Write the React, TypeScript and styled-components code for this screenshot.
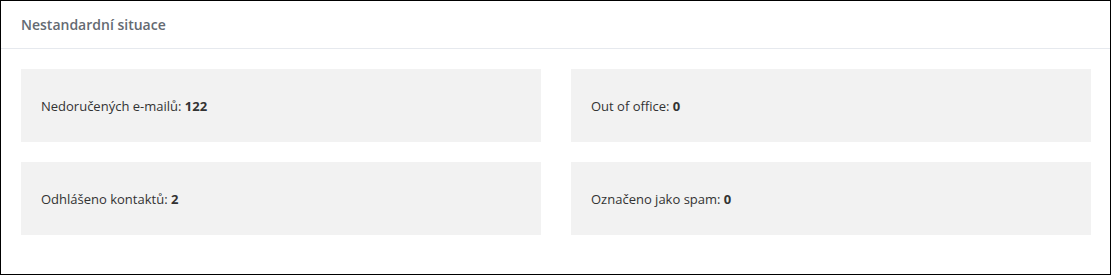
import React from 'react';
import styled, { createGlobalStyle } from 'styled-components';

const GlobalStyle = createGlobalStyle`
  html, body {
    margin: 0;
    padding: 0;
    background: #fff;
  }
  body {
    font-family: "Open Sans", "Noto Sans", sans-serif;
  }
`;

const Panel = styled.section`
  width: 1111px;
  height: 275px;
  box-sizing: border-box;
  border: 1px solid #000;
  background: #fff;
`;

const Header = styled.header`
  height: 48px;
  box-sizing: border-box;
  padding: 0 20px;
  display: flex;
  align-items: center;
  border-bottom: 1px solid #e6e9ee;
`;

const Title = styled.h2`
  margin: 0;
  font-size: 14px;
  font-weight: 600;
  color: #646a72;
`;

const Body = styled.div`
  display: grid;
  grid-template-columns: 520px 520px;
  column-gap: 30px;
  row-gap: 20px;
  padding: 20px 19px 0 20px;
`;

const Stat = styled.div`
  height: 73px;
  background: #f2f2f2;
  display: flex;
  align-items: center;
  padding: 0 20px;
  font-size: 13px;
  color: #333;
  white-space: pre;
`;

const Value = styled.b`
  font-weight: 700;
`;

const stats = [
  { label: 'Nedoručených e-mailů:', value: 122 },
  { label: 'Out of office:', value: 0 },
  { label: 'Odhlášeno kontaktů:', value: 2 },
  { label: 'Označeno jako spam:', value: 0 },
];

const App: React.FC = function () {
  return (
    <>
      <GlobalStyle />
      <Panel>
        <Header>
          <Title>Nestandardní situace</Title>
        </Header>
        <Body>
          {stats.map((s) => (
            <Stat key={s.label}>
              {s.label} <Value>{s.value}</Value>
            </Stat>
          ))}
        </Body>
      </Panel>
    </>
  );
};

export default App;
